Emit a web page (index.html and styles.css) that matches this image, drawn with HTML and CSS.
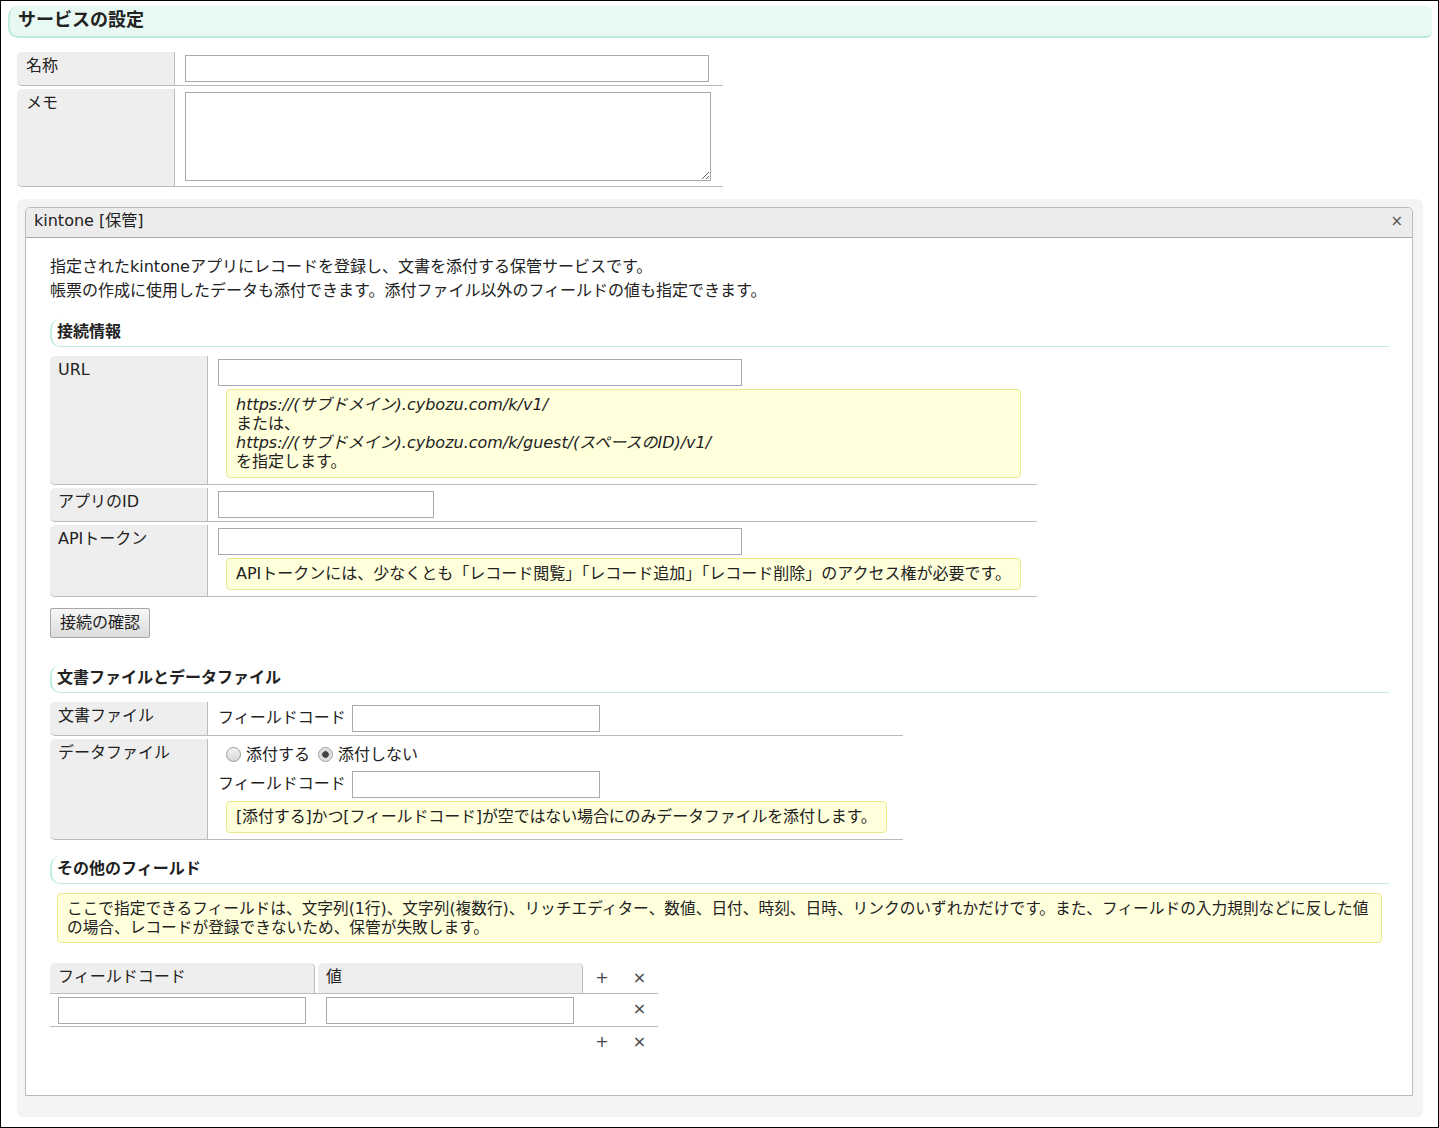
FILE: index.html
```html
<!DOCTYPE html>
<html lang="ja">
<head>
  <meta charset="UTF-8">
  <title>サービスの設定</title>
  <link rel="stylesheet" href="styles.css">
</head>
<body>
<div class="frame">

  <h1 class="page-title">サービスの設定</h1>

  <table class="props">
    <tr>
      <th>名称</th>
      <td><input type="text" class="input-wide"></td>
    </tr>
    <tr>
      <th>メモ</th>
      <td><textarea class="memo"></textarea></td>
    </tr>
  </table>

  <div class="service-box">
    <div class="service">
      <div class="service-head">
        <span>kintone [保管]</span>
        <span class="close">×</span>
      </div>
      <div class="service-body">
        <p class="desc">指定されたkintoneアプリにレコードを登録し、文書を添付する保管サービスです。<br>帳票の作成に使用したデータも添付できます。添付ファイル以外のフィールドの値も指定できます。</p>

        <h2 class="section-title">接続情報</h2>
        <table class="props inner">
          <tr>
            <th>URL</th>
            <td>
              <input type="text" class="input-wide">
              <div class="note">
                <i>https://(サブドメイン).cybozu.com/k/v1/</i><br>
                または、<br>
                <i>https://(サブドメイン).cybozu.com/k/guest/(スペースのID)/v1/</i><br>
                を指定します。
              </div>
            </td>
          </tr>
          <tr>
            <th>アプリのID</th>
            <td><input type="text" class="input-short"></td>
          </tr>
          <tr>
            <th>APIトークン</th>
            <td>
              <input type="text" class="input-wide">
              <div class="note">APIトークンには、少なくとも「レコード閲覧」「レコード追加」「レコード削除」のアクセス権が必要です。</div>
            </td>
          </tr>
        </table>
        <button class="btn">接続の確認</button>

        <h2 class="section-title">文書ファイルとデータファイル</h2>
        <table class="props inner">
          <tr>
            <th>文書ファイル</th>
            <td>
              <div class="field-line">フィールドコード <input type="text" class="input-code"></div>
            </td>
          </tr>
          <tr>
            <th>データファイル</th>
            <td>
              <div class="radio-line">
                <label><input type="radio" name="data"> 添付する</label>
                <label><input type="radio" name="data" checked> 添付しない</label>
              </div>
              <div class="field-line">フィールドコード <input type="text" class="input-code"></div>
              <div class="note note-tight">[添付する]かつ[フィールドコード]が空ではない場合にのみデータファイルを添付します。</div>
            </td>
          </tr>
        </table>

        <h2 class="section-title">その他のフィールド</h2>
        <div class="note note-wide">ここで指定できるフィールドは、文字列(1行)、文字列(複数行)、リッチエディター、数値、日付、時刻、日時、リンクのいずれかだけです。また、フィールドの入力規則などに反した値の場合、レコードが登録できないため、保管が失敗します。</div>

        <div class="kv">
          <div class="kv-row kv-head">
            <div class="kv-th">フィールドコード</div>
            <div class="kv-th">値</div>
            <div class="kv-op">+</div>
            <div class="kv-op">×</div>
          </div>
          <div class="kv-row">
            <div class="kv-td"><input type="text" class="input-code"></div>
            <div class="kv-td"><input type="text" class="input-code"></div>
            <div class="kv-op"></div>
            <div class="kv-op">×</div>
          </div>
          <div class="kv-row kv-foot">
            <div class="kv-td"></div>
            <div class="kv-td"></div>
            <div class="kv-op">+</div>
            <div class="kv-op">×</div>
          </div>
        </div>
      </div>
    </div>
  </div>

</div>
</body>
</html>
```

FILE: styles.css
```css
body {
  margin: 0;
  font-family: "DejaVu Sans", "Noto Sans CJK JP", sans-serif;
  font-size: 16px;
  line-height: 1.4;
  color: #222;
}
.frame {
  border: 1px solid #000;
  height: 1128px;
  box-sizing: border-box;
  padding: 5px 6px 0 7px;
  overflow: hidden;
}
.page-title {
  margin: 0;
  font-size: 18px;
  font-weight: bold;
  line-height: 28px;
  padding: 0 8px 2px 8px;
  background: #e8f8f2;
  border-left: 2px solid #bdebdc;
  border-bottom: 2px solid #bdebdc;
  border-radius: 10px 6px 6px 10px;
}
input[type="text"], textarea {
  border: 1px solid #aaa;
  height: 27px;
  box-sizing: border-box;
  margin: 0;
  padding: 2px 4px;
  font: inherit;
  vertical-align: top;
}
.input-wide { width: 524px; }
.input-short { width: 216px; }
.input-code { width: 248px; }
textarea.memo {
  width: 526px;
  height: 89px;
  display: block;
  margin-bottom: 2px;
}

/* property tables */
.props {
  border-collapse: separate;
  border-spacing: 0 3px;
  margin: 11px 0 0 9px;
}
.props th {
  box-sizing: border-box;
  width: 158px;
  background: #eee;
  font-weight: normal;
  text-align: left;
  vertical-align: top;
  padding: 2px 8px 3px 9px;
  line-height: 24px;
  border-right: 1px solid #bbb;
  border-bottom: 1px solid #bbb;
  border-radius: 5px 0 0 5px;
}
.props td {
  vertical-align: top;
  padding: 3px 12px 3px 10px;
  border-bottom: 1px solid #bbb;
}
.props.inner {
  margin: 6px 0 0 0;
}
.props.inner th {
  padding-left: 8px;
}
.props.inner td {
  padding-right: 16px;
}

.note {
  margin: 3px 0 3px 8px;
  padding: 5px 9px 6px 9px;
  line-height: 19px;
  background: #ffffdb;
  border: 1px solid #ebe98a;
  border-radius: 4px;
}
.note i {
  font-style: italic;
}
.note-tight {
  letter-spacing: -0.15px;
}

/* service panel */
.service-box {
  margin: 9px 9px 0 9px;
  padding: 8px 10px 21px 8px;
  background: #f4f4f4;
  border-radius: 6px;
}
.service {
  border: 1px solid #bbb;
  border-radius: 5px 5px 0 0;
  background: #fff;
}
.service-head {
  display: flex;
  justify-content: space-between;
  align-items: center;
  padding: 0 9px 2px 8px;
  box-sizing: border-box;
  height: 30px;
  background: #ececec;
  border-bottom: 1px solid #aaa;
  border-radius: 5px 5px 0 0;
}
.close {
  color: #555;
  font-size: 15px;
}
.service-body {
  padding: 17px 23px 38px 24px;
}
.desc {
  margin: 0;
  line-height: 24px;
}
.section-title {
  margin: 16px 0 0 0;
  font-size: 16px;
  font-weight: bold;
  line-height: 20px;
  padding: 3px 5px 4px 5px;
  border-left: 2px solid #c2eede;
  border-bottom: 1px solid #c2eede;
  border-radius: 10px 0 0 10px;
}
.btn {
  margin-top: 8px;
  height: 30px;
  padding: 0 9px;
  font: inherit;
  color: #222;
  background: linear-gradient(#f6f6f6, #dcdcdc);
  border: 1px solid #a6a6a6;
  border-radius: 2px;
}
.btn + .section-title {
  margin-top: 27px;
}
.props + .section-title {
  margin-top: 13px;
}

.field-line {
  display: flex;
  align-items: center;
  gap: 6px;
  height: 27px;
}
.radio-line {
  display: flex;
  align-items: center;
  height: 26px;
  padding-left: 8px;
  gap: 8px;
  margin: 0 0 3px 0;
}
.radio-line label {
  display: flex;
  align-items: center;
  gap: 5px;
}
input[type="radio"] {
  appearance: none;
  -webkit-appearance: none;
  width: 15px;
  height: 15px;
  margin: 0;
  border: 1px solid #9a9a9a;
  border-radius: 50%;
  background: linear-gradient(#f4f4f4, #d6d6d6);
}
input[type="radio"]:checked {
  background: radial-gradient(circle, #444 0 3px, #cfcfcf 3.5px, #f0f0f0 7px);
}

.note-wide {
  margin: 9px 7px 0 7px;
  padding-bottom: 5px;
  font-size: 15.7px;
}

/* key / value table */
.kv {
  margin-top: 20px;
  width: 608px;
}
.kv-row {
  display: flex;
  border-bottom: 1px solid #bbb;
}
.kv-foot {
  border-bottom: none;
}
.kv-th {
  box-sizing: border-box;
  width: 265px;
  height: 30px;
  line-height: 28px;
  padding: 0 8px;
  background: #eee;
  border-right: 1px solid #bbb;
  border-radius: 5px 5px 0 0;
}
.kv-th + .kv-th {
  margin-left: 3px;
}
.kv-td {
  box-sizing: border-box;
  width: 265px;
  padding: 3px 8px 2px 8px;
}
.kv-td + .kv-td {
  margin-left: 3px;
}
.kv-op {
  width: 38px;
  text-align: center;
  line-height: 30px;
  color: #444;
}
.kv-op + .kv-op {
  width: 37px;
}
.kv-foot .kv-td {
  height: 30px;
}
```
